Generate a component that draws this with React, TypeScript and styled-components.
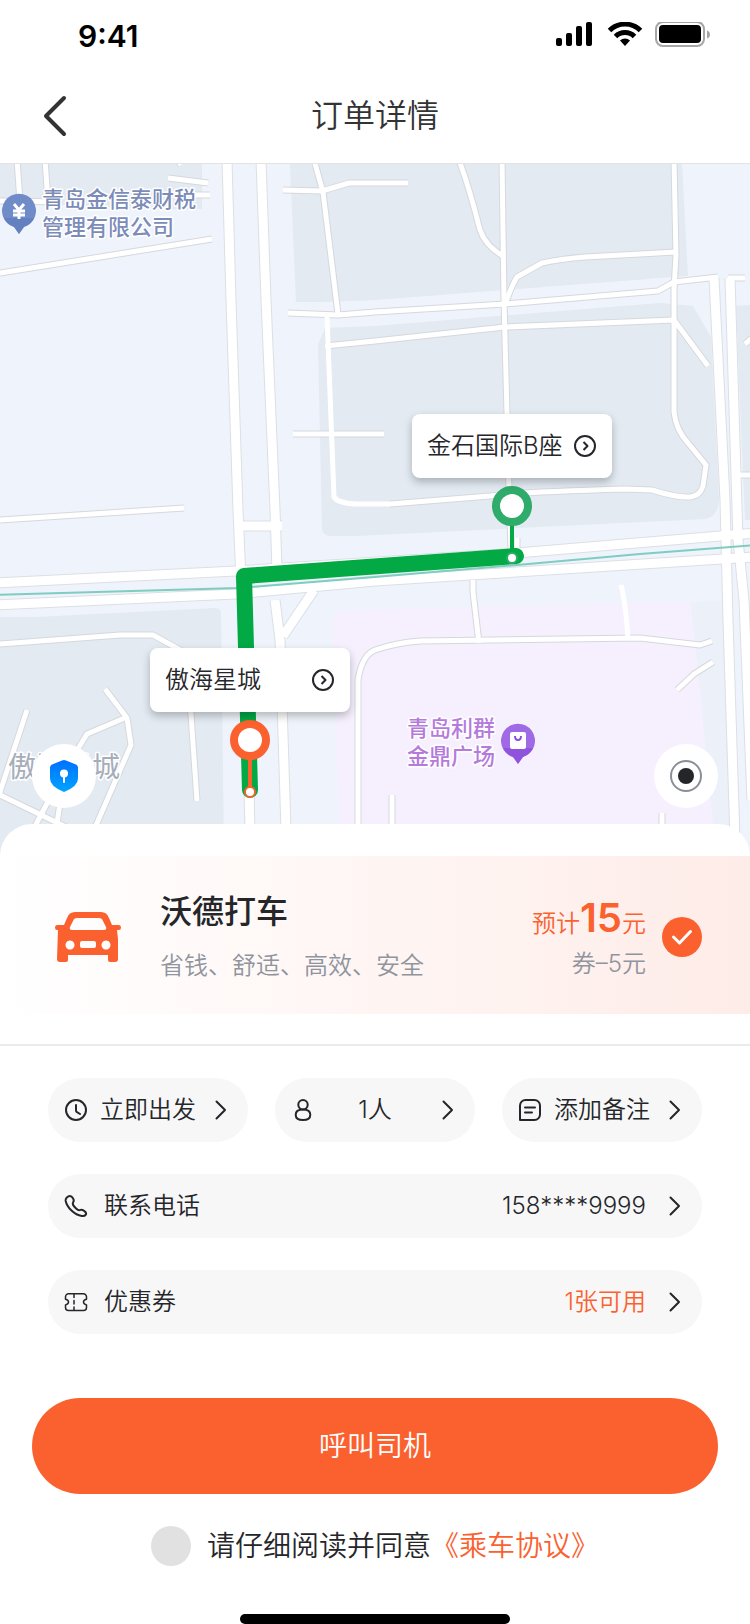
import React from "react";
import styled, { createGlobalStyle } from "styled-components";

const accent = "#fb612f";
const ink = "#25262a";
const muted = "#8f949d";

const GlobalStyle = createGlobalStyle`
  *, *::before, *::after { box-sizing: border-box; }
  body {
    margin: 0;
    background: #fff;
    color: ${ink};
    font-family: Inter, "Noto Sans CJK SC", sans-serif;
    font-size: 24px;
    font-weight: 350;
    line-height: 32px;
  }
  button, input { font: inherit; color: inherit; }
  svg { display: block; flex: none; }
`;

const Page = styled.div`
  display: flex;
  flex-direction: column;
  min-height: 100vh;
`;

const StatusBar = styled.div`
  display: flex;
  align-items: center;
  justify-content: space-between;
  height: 72px;
  padding: 0 40px 0 78px;
`;

const Time = styled.time`
  font-size: 30px;
  font-weight: 600;
  color: #000;
`;

const NavBar = styled.header`
  display: grid;
  grid-template-columns: 1fr auto 1fr;
  align-items: center;
  height: 92px;
  padding: 0 40px 4px;
  border-bottom: 1px solid #e3e3e3;
`;

const IconButton = styled.button`
  justify-self: start;
  padding: 0;
  border: 0;
  background: none;
  cursor: pointer;
`;

const NavTitle = styled.h1`
  margin: 0;
  font-size: 32px;
  font-weight: 350;
  line-height: 48px;
  color: #333;
`;

const MapArea = styled.section`
  position: relative;
  height: 692px;
  overflow: hidden;
  background: #eff3fb;
`;

const Callout = styled.button<{ $x: number; $y: number }>`
  position: absolute;
  left: calc(50% + ${(p) => p.$x}px);
  top: ${(p) => p.$y}px;
  display: flex;
  align-items: center;
  justify-content: space-between;
  width: 200px;
  height: 64px;
  padding: 0 15px;
  border: 0;
  border-radius: 8px;
  background: #fff;
  box-shadow: 0 4px 8px rgba(0, 0, 0, 0.25);
  cursor: pointer;
`;

const RoundButton = styled.button<{ $side: "left" | "right" }>`
  position: absolute;
  top: 580px;
  ${(p) => p.$side}: 32px;
  display: grid;
  place-items: center;
  width: 64px;
  height: 64px;
  padding: 0;
  border: 0;
  border-radius: 50%;
  background: #fff;
  cursor: pointer;
`;

const Sheet = styled.main`
  position: relative;
  flex: 1;
  display: flex;
  flex-direction: column;
  margin-top: -32px;
  padding-top: 32px;
  border-radius: 32px 32px 0 0;
  background: #fff;
`;

const RideOption = styled.label`
  display: flex;
  align-items: center;
  height: 158px;
  padding: 4px 48px 0 55px;
  background: linear-gradient(90deg, #fff 0%, #feece8 100%);
  cursor: pointer;
`;

const RideText = styled.div`
  flex: 1;
  display: grid;
  gap: 14px;
  margin-left: 39px;
  padding-bottom: 4px;
`;

const RideName = styled.h2`
  margin: 0;
  font-size: 32px;
  font-weight: 500;
  line-height: 48px;
`;

const Hint = styled.p`
  margin: 0;
  color: ${muted};
`;

const Price = styled.div`
  margin-right: 16px;
  text-align: right;
`;

const Fare = styled.p`
  margin: 0;
  line-height: 48px;
  color: ${accent};
  strong {
    font-size: 40px;
    font-weight: 600;
  }
`;

const CheckMark = styled.span`
  display: grid;
  width: 40px;
  height: 40px;
  > * { grid-area: 1 / 1; }
  svg { pointer-events: none; }
`;

const Tick = styled.input.attrs({ type: "checkbox" })`
  appearance: none;
  width: 40px;
  height: 40px;
  margin: 0;
  border-radius: 50%;
  background: #e1e1e1;
  cursor: pointer;
  &:checked { background: ${accent}; }
`;

const Options = styled.section`
  display: grid;
  gap: 32px;
  margin-top: 30px;
  padding: 32px 48px 0;
  border-top: 2px solid #ebebeb;
`;

const OptionRow = styled.div`
  display: flex;
  justify-content: space-between;
`;

const Pill = styled.button<{ $short?: boolean }>`
  display: flex;
  align-items: center;
  gap: ${(p) => (p.$short ? 12 : 16)}px;
  width: ${(p) => (p.$short ? "200px" : "100%")};
  height: 64px;
  padding: 0 16px;
  border: 0;
  border-radius: 32px;
  background: #f7f7f7;
  text-align: left;
  cursor: pointer;
`;

const PillLabel = styled.span<{ $center?: boolean }>`
  flex: 1;
  white-space: nowrap;
  text-align: ${(p) => (p.$center ? "center" : "left")};
`;

const PillValue = styled.span<{ $accent?: boolean }>`
  color: ${(p) => (p.$accent ? accent : "inherit")};
`;

const CallButton = styled.button`
  height: 96px;
  margin: 64px 32px 0;
  border: 0;
  border-radius: 48px;
  background: ${accent};
  color: #fff;
  font-size: 28px;
  cursor: pointer;
`;

const Agreement = styled.div`
  display: flex;
  align-items: center;
  justify-content: center;
  gap: 16px;
  margin-top: 32px;
  font-size: 28px;
  line-height: 40px;
  white-space: nowrap;
  a { color: ${accent}; text-decoration: none; }
`;

const HomeBar = styled.div`
  align-self: center;
  width: 270px;
  height: 10px;
  margin-top: 48px;
  border-radius: 5px;
  background: #000;
`;

const StatusIcons = () => (
  <svg width="156" height="28" viewBox="0 0 156 28" aria-hidden="true">
    <rect x="2" y="16" width="6" height="8" rx="2" />
    <rect x="12" y="11" width="6" height="13" rx="2" />
    <rect x="22" y="4" width="6" height="20" rx="2" />
    <rect x="32" y="0" width="6" height="24" rx="2" />
    <g fill="none" stroke="#000" strokeWidth="5">
      <path d="M55.500 8.500a22 22 0 0 1 31 0" />
      <path d="M61.500 14.500a13.500 13.500 0 0 1 19 0" />
    </g>
    <path d="M71 24l-5-5.500a7.500 7.500 0 0 1 10 0z" />
    <rect x="102" y="-1" width="48" height="24" rx="7" fill="none" stroke="#a6a6a6" strokeWidth="2" transform="translate(0 1)" />
    <rect x="105" y="3" width="42" height="18" rx="4" />
    <path d="M153 8.500q3 1 3 4t-3 4z" fill="#a6a6a6" />
  </svg>
);

const BackIcon = () => (
  <svg width="32" height="44" viewBox="0 0 32 44" fill="none" stroke="#333" strokeWidth="4" strokeLinecap="round" strokeLinejoin="round">
    <path d="M24 4L6 22l18 18" />
  </svg>
);

const CircleArrow = () => (
  <svg width="24" height="24" viewBox="0 0 24 24" fill="none" stroke={ink} strokeWidth="2" strokeLinejoin="round">
    <circle cx="12" cy="12" r="10" />
    <path d="M10.500 8l4 4-4 4" />
  </svg>
);

const Chevron = () => (
  <svg width="24" height="24" viewBox="0 0 24 24" fill="none" stroke={ink} strokeWidth="2" strokeLinecap="round" strokeLinejoin="round">
    <path d="M8.500 3.500l8.500 8.500L8.500 20.500" />
  </svg>
);

const Outline = ({ children, width = 2 }: { children: React.ReactNode; width?: number }) => (
  <svg width="24" height="24" viewBox="0 0 24 24" fill="none" stroke={ink} strokeWidth={width} strokeLinecap="round" strokeLinejoin="round">
    {children}
  </svg>
);

const ClockIcon = () => (
  <Outline>
    <circle cx="12" cy="12" r="10" />
    <path d="M12 7v5.500q0 1 1 1.700l3 1.800" />
  </Outline>
);

const PersonIcon = () => (
  <Outline>
    <circle cx="12" cy="6.700" r="4.700" />
    <path d="M12 11.400c4.500 0 7.300 2 7.300 5.300s-2.800 5.300-7.300 5.300-7.300-2-7.300-5.300 2.800-5.300 7.300-5.300z" />
  </Outline>
);

const NoteIcon = () => (
  <Outline>
    <path d="M2 22V7.500A5.500 5.500 0 0 1 7.500 2h9A5.500 5.500 0 0 1 22 7.500v9a5.500 5.500 0 0 1-5.500 5.500z" />
    <path d="M7 9.500h10M7 14.500h7" />
  </Outline>
);

const PhoneIcon = () => (
  <Outline>
    <path d="M5.500 2c1.500-.3 2.600.7 3.600 2.500 1 1.800.8 2.700.1 3.800-1 1.500-.7 2.300 1 4.200 2.200 2.500 4 4 5.300 3.600 1.600-.6 2.400-.8 4.300.5 2.300 1.500 2.900 2.600 2 4-.8 1.200-2 1.700-4 1.400C10.500 21 3 13.500 1.700 7 1.300 4.500 3.500 2.300 5.500 2z" />
  </Outline>
);

const TicketIcon = () => (
  <Outline width={1.500}>
    <path d="M4.500 3.800h15a3 3 0 0 1 3 3v2.500q-3 .7-3 2.800t3 2.800v2.500a3 3 0 0 1-3 3h-15a3 3 0 0 1-3-3v-2.500q3-.7 3-2.800t-3-2.800v-2.500a3 3 0 0 1 3-3z" />
    <path d="M10 4.500v3M10 10.500v3.500M10 17v3" />
  </Outline>
);

const CarIcon = () => (
  <svg width="66" height="52" viewBox="0 0 66 52" fill={accent} fillRule="evenodd">
    <path d="M20 1h26q6 0 8 6l3 7h7q2 0 2 2.500T64 19h-2l1 9v20q0 3-3 3h-5q-2 0-2-2v-5H13v5q0 2-2 2H5q-3 0-3-3l1-29H2q-2 0-2-2.500T2 14h7l3-7q2-6 8-6zM22 7q-3 0-4 3l-3 6q-1 3 2 3h32q3 0 2-3l-3-6q-1-3-4-3zM15 29.500a4.500 4.500 0 1 0 .010 0zM51 29.500a4.500 4.500 0 1 0 .010 0zM27 30q-2 0-2 2v3q0 2 2 2h12q2 0 2-2v-3q0-2-2-2z" />
  </svg>
);

const ShieldIcon = () => (
  <svg width="32" height="36" viewBox="0 0 32 36">
    <defs>
      <linearGradient id="shield" x1="0" y1="0" x2="0" y2="1">
        <stop offset="0" stopColor="#0070ff" />
        <stop offset="1" stopColor="#00a4ff" />
      </linearGradient>
    </defs>
    <path d="M14 2.500q2-1 4 0l10 4q2 1 2 3v11q0 8-14 13.500Q2 28.500 2 20.500v-11q0-2 2-3z" fill="url(#shield)" />
    <circle cx="16" cy="15.500" r="4" fill="#fff" />
    <path d="M16 18v6" stroke="#fff" strokeWidth="2" strokeLinecap="round" />
  </svg>
);

const LocateIcon = () => (
  <svg width="34" height="34" viewBox="0 0 34 34">
    <circle cx="17" cy="17" r="15" fill="none" stroke="#8b8f99" strokeWidth="2" />
    <circle cx="17" cy="17" r="8" fill={ink} />
  </svg>
);

const lanes = [
  "M17 160L20 201", "M45 160L48 201", "M0 201L60 202", "M178 160L181 165",
  "M168 178L208 183", "M190 195H210", "M0 273L100 257L212 239",
  "M314 160L323 192L338 314", "M283 190L322 191L349 183H408",
  "M288 313L338 315L375 312L505 304L658 291L674 282L718 277",
  "M325 346L375 341L505 327L674 320L708 366",
  "M674 160L676 255L674 290V412Q676 430 688 443L706 465L703 486Q700 496 690 497Q678 498 652 490L625 489Q520 492 490 496L390 504",
  "M459 160Q470 190 480 230Q486 247 505 257",
  "M502 160L504 300L509 490L511 550", "M517 538V552",
  "M506 302Q512 285 517 277L542 263Q560 259 585 257L676 252",
  "M293 434H384", "M0 520L184 508",
  "M0 644L120 635H153L182 651", "M190 700L197 801",
  "M105 689L127 718L131 745L94 830", "M127 717L87 734L62 775L33 830",
  "M27 710L0 792V795L68 828", "M62 790L56 830",
  "M358 830V680Q362 655 375 650Q395 643 420 641L640 638L700 645L712 641",
  "M473 580V592L479 643", "M677 690L694 674L713 662",
  "M392 795V830", "M662 813V830", "M745 344L752 338", "M740 475H752", "M728 278H745",
];
const faintLanes = ["M327 316L334 497Q338 503 355 504H390", "M621 585Q626 605 628 640"];
const avenues = [
  "M227 160L231 300L238 510L241 580", "M261 160L266 300L275 510L277 570",
  "M244 590L250 830", "M275 600L280 640L286 830",
  "M242 526H282", "M314 590L283 636", "M714 278L725 500L728 620L735 840",
  "M730 278L738 540L744 600L752 800",
  "M-5 583L236 571L517 553L755 533", "M-5 605L236 594L375 581L755 557",
];

const MapPin = ({ x, y, color, deep }: { x: number; y: number; color: string; deep: string }) => (
  <g transform={`translate(${x} ${y})`}>
    <path d="M0 22L-5 15A17 17 0 1 1 5 15z" fill={color} />
    <path d="M-15 6A17 17 0 0 0-5 15L0 22L5 15A17 17 0 0 0 15 6z" fill={deep} opacity=".5" />
  </g>
);

const MapLabel = styled.text<{ $large?: boolean }>`
  font-size: ${(p) => (p.$large ? 28 : 22)}px;
  font-weight: ${(p) => (p.$large ? 400 : 500)};
  paint-order: stroke;
  stroke: #fff;
  stroke-width: 3px;
  stroke-linejoin: round;
`;

const CityMap = () => (
  <svg width="100%" height="692" viewBox="0 164 750 692" preserveAspectRatio="xMidYMin slice">
    <g fill="#e3eaf2">
      <path d="M0 164H202V209H150L0 202z" />
      <path d="M290 164H682L688 276L660 278L375 300L323 302H296z" />
      <path d="M325 328L375 326L660 303L693 306L711 337L719 500Q718 517 705 519L355 536H332Q322 536 322 528L318 345z" />
      <path d="M736 306L750 305V520H745z" />
      <path d="M0 617H36L215 608Q221 608 221 614L224 856H0z" />
    </g>
    <path d="M690 603L726 600L732 856H700z" fill="#ebf0f9" />
    <path d="M345 610L685 602Q691 602 691 608L699 680L716 856H340L332 630Q331 611 345 610z" fill="#f6f0fe" />
    <g fill="none" strokeLinejoin="round">
      <g stroke="#d6d8dd" strokeWidth="7">{lanes.map((d) => <path key={d} d={d} />)}</g>
      <g stroke="#dcdfe5" strokeWidth="11">{avenues.map((d) => <path key={d} d={d} />)}</g>
      <g stroke="#fff" strokeWidth="5">
        {[...lanes, ...faintLanes].map((d) => <path key={d} d={d} />)}
      </g>
      <g stroke="#fff" strokeWidth="9">{avenues.map((d) => <path key={d} d={d} />)}</g>
      <path d="M-5 595L238 588L375 577L517 565L640 554L755 545" stroke="#7fcdc0" strokeWidth="2" />
      <path d="M516 556L244 576L250 790" stroke="#02a945" strokeWidth="16" strokeLinecap="round" />
    </g>

    <MapPin x={19} y={212} color="#6f8cc8" deep="#5873b8" />
    <path d="M14 204l5 6 5-6M19 210v9M13 211h12M13 215h12" fill="none" stroke="#fff" strokeWidth="3" />
    <g fill="#7c8cb8">
      <MapLabel x="42" y="207">青岛金信泰财税</MapLabel>
      <MapLabel x="42" y="235">管理有限公司</MapLabel>
    </g>
    <MapPin x={518} y={742} color="#a06ae6" deep="#7f3bd0" />
    <rect x="510" y="732" width="16" height="17" rx="2" fill="#fff" />
    <path d="M515 736q0 4 3 4t3-4" fill="none" stroke="#8d50da" strokeWidth="2" />
    <g fill="#b57bdc">
      <MapLabel x="407" y="736">青岛利群</MapLabel>
      <MapLabel x="407" y="764">金鼎广场</MapLabel>
    </g>
    <MapLabel $large x="8" y="777" fill="#a6adba">傲海星城</MapLabel>

    <path d="M512 524V552" stroke="#02a945" strokeWidth="4" />
    <circle cx="512" cy="558" r="5" fill="#fff" stroke="#2fab6a" strokeWidth="2" />
    <circle cx="512" cy="506" r="16" fill="#fff" stroke="#2fab6a" strokeWidth="8" />
    <path d="M250 758V788" stroke={accent} strokeWidth="4" />
    <circle cx="250" cy="792" r="5" fill="#fff" stroke={accent} strokeWidth="2" />
    <circle cx="250" cy="740" r="16" fill="#fff" stroke={accent} strokeWidth="8" />
  </svg>
);

export default function App() {
  return (
    <Page>
      <GlobalStyle />
      <StatusBar>
        <Time>9:41</Time>
        <StatusIcons />
      </StatusBar>
      <NavBar>
        <IconButton aria-label="返回"><BackIcon /></IconButton>
        <NavTitle>订单详情</NavTitle>
      </NavBar>

      <MapArea>
        <CityMap />
        <Callout $x={37} $y={250}>金石国际B座<CircleArrow /></Callout>
        <Callout $x={-225} $y={484}>傲海星城<CircleArrow /></Callout>
        <RoundButton $side="left" aria-label="安全中心"><ShieldIcon /></RoundButton>
        <RoundButton $side="right" aria-label="定位"><LocateIcon /></RoundButton>
      </MapArea>

      <Sheet>
        <RideOption>
          <CarIcon />
          <RideText>
            <RideName>沃德打车</RideName>
            <Hint>省钱、舒适、高效、安全</Hint>
          </RideText>
          <Price>
            <Fare>预计<strong>15</strong>元</Fare>
            <Hint>券–5元</Hint>
          </Price>
          <CheckMark>
            <Tick defaultChecked />
            <svg width="40" height="40" viewBox="0 0 40 40" fill="none" stroke="#fff" strokeWidth="3" strokeLinecap="round" strokeLinejoin="round">
              <path d="M11.500 20l6 6L28.500 14.500" />
            </svg>
          </CheckMark>
        </RideOption>

        <Options>
          <OptionRow>
            <Pill $short><ClockIcon /><PillLabel>立即出发</PillLabel><Chevron /></Pill>
            <Pill $short><PersonIcon /><PillLabel $center>1人</PillLabel><Chevron /></Pill>
            <Pill $short><NoteIcon /><PillLabel>添加备注</PillLabel><Chevron /></Pill>
          </OptionRow>
          <Pill><PhoneIcon /><PillLabel>联系电话</PillLabel><PillValue>158****9999</PillValue><Chevron /></Pill>
          <Pill><TicketIcon /><PillLabel>优惠券</PillLabel><PillValue $accent>1张可用</PillValue><Chevron /></Pill>
        </Options>

        <CallButton>呼叫司机</CallButton>
        <Agreement>
          <Tick id="agree" />
          <span>
            <label htmlFor="agree">请仔细阅读并同意</label>
            <a href="#terms">《乘车协议》</a>
          </span>
        </Agreement>
        <HomeBar />
      </Sheet>
    </Page>
  );
}
